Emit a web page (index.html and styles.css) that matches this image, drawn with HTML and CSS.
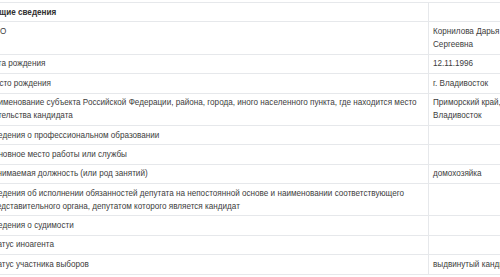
FILE: index.html
```html
<!DOCTYPE html>
<html lang="ru">
<head>
<meta charset="utf-8">
<title>Общие сведения</title>
<link rel="stylesheet" href="styles.css">
</head>
<body>
<table class="info">
  <tbody>
    <tr class="head"><td class="label">Общие сведения</td><td class="value"></td></tr>
    <tr><td class="label">ФИО</td><td class="value">Корнилова Дарья Сергеевна</td></tr>
    <tr><td class="label">Дата рождения</td><td class="value">12.11.1996</td></tr>
    <tr><td class="label">Место рождения</td><td class="value">г. Владивосток</td></tr>
    <tr><td class="label">Наименование субъекта Российской Федерации, района, города, иного населенного пункта, где находится место жительства кандидата</td><td class="value">Приморский край, г. Владивосток</td></tr>
    <tr><td class="label">Сведения о профессиональном образовании</td><td class="value"></td></tr>
    <tr><td class="label">Основное место работы или службы</td><td class="value"></td></tr>
    <tr><td class="label">Занимаемая должность (или род занятий)</td><td class="value">домохозяйка</td></tr>
    <tr><td class="label">Сведения об исполнении обязанностей депутата на непостоянной основе и наименовании соответствующего представительного органа, депутатом которого является кандидат</td><td class="value"></td></tr>
    <tr><td class="label">Сведения о судимости</td><td class="value"></td></tr>
    <tr><td class="label">Статус иноагента</td><td class="value"></td></tr>
    <tr><td class="label">Статус участника выборов</td><td class="value">выдвинутый кандидат</td></tr>
  </tbody>
</table>
</body>
</html>
```

FILE: styles.css
```css
html, body {
  margin: 0;
  padding: 0;
  background: #fff;
}
body {
  font-family: "Liberation Sans", Arial, sans-serif;
  font-size: 8.15px;
  line-height: 13px;
  color: #3d3d3d;
  overflow: hidden;
}
.info {
  border-collapse: collapse;
  table-layout: fixed;
  width: 544px;
  margin: 2px 0 0 -16px;
}
.info td {
  border-top: 1px solid #e6e8eb;
  border-bottom: 1px solid #e6e8eb;
  padding: 2.7px 4px;
  vertical-align: top;
  text-align: left;
}
.info .label {
  width: 436px;
  border-right: 1px solid #e6e8eb;
}
.info .value {
  width: 92px;
}
.info .head .label {
  font-weight: bold;
  color: #2f2f2f;
}
```
